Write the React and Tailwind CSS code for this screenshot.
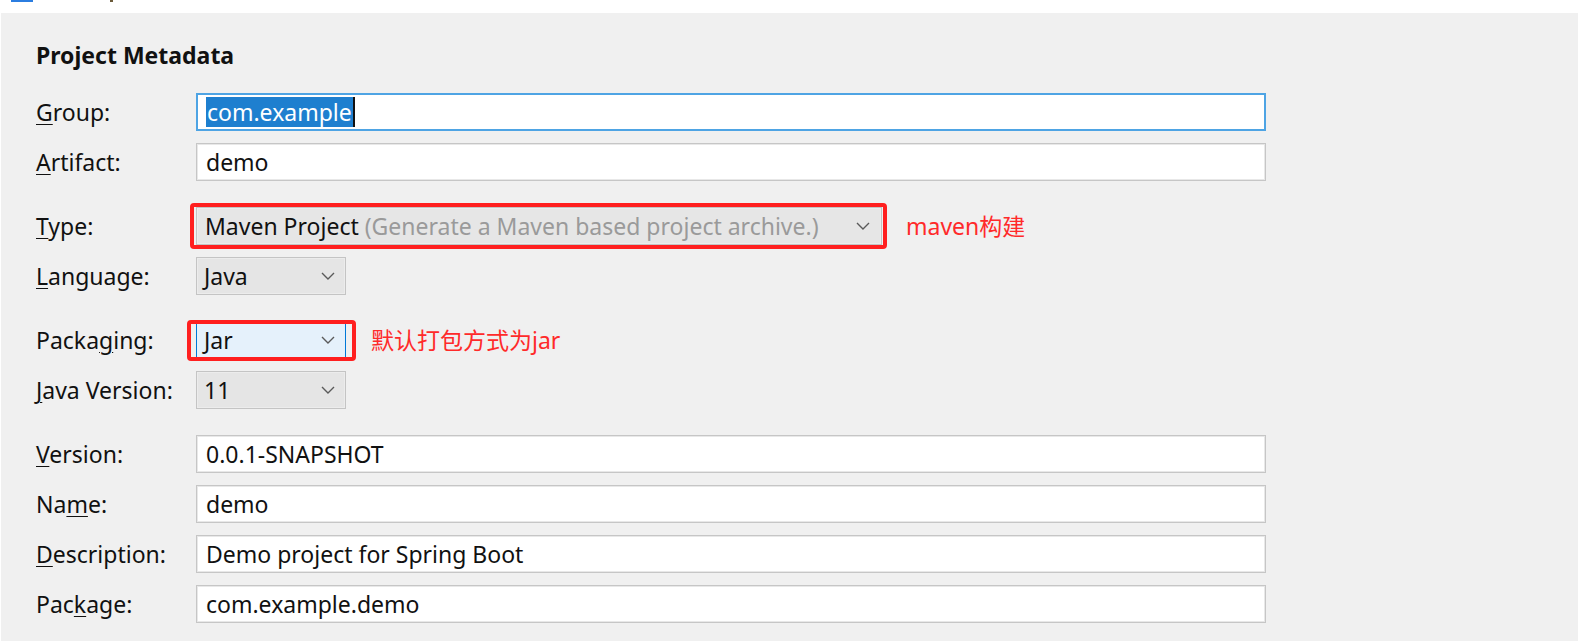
import React from "react";

const font = { fontFamily: '"Noto Sans", "Noto Sans CJK SC", sans-serif' };

function Chevron() {
  return (
    <svg width="14" height="8" viewBox="0 0 14 8" className="shrink-0">
      <polyline points="1,1 7,7 13,1" fill="none" stroke="#5a5a5a" strokeWidth="1.4" />
    </svg>
  );
}

function Label({ pre, u, post }) {
  return (
    <div className="w-[160px] shrink-0 text-[23px] text-[#111] whitespace-nowrap">
      {pre}
      <u className="underline underline-offset-[3px] decoration-1">{u}</u>
      {post}
    </div>
  );
}

function TextField({ value }) {
  return (
    <div className="w-[1070px] h-[38px] bg-white border border-[#c6c6c6] shadow-[inset_0_0_0_1px_#e8e8e8] flex items-center pl-[9px] text-[23px] text-[#111]">
      {value}
    </div>
  );
}

function Row({ label, children }) {
  return (
    <div className="flex items-center h-[38px]">
      <Label {...label} />
      {children}
    </div>
  );
}

function SmallSelect({ value }) {
  return (
    <div className="w-[150px] h-[38px] bg-[#e5e5e5] border border-[#c4c4c4] shadow-[inset_0_0_0_1px_#ececec] flex items-center justify-between pl-[7px] pr-[10px] text-[23px] text-[#111]">
      <span>{value}</span>
      <Chevron />
    </div>
  );
}

export default function App() {
  return (
    <div className="w-[1578px] h-[641px] bg-white overflow-hidden" style={font}>
      <div className="h-[13px] relative">
        <div className="absolute left-[11px] top-0 w-[22px] h-[2px] bg-[#2b7de0]" />
        <div className="absolute left-[110px] top-0 w-[3px] h-[2px] bg-[#6b5a3a]" />
      </div>
      <div className="ml-[1px] h-[628px] bg-[#f0f0f0] pl-[35px] pt-[27px]">
        <div className="text-[23px] font-bold leading-[30px] text-[#111]">Project Metadata</div>

        <div className="mt-[23px] flex flex-col gap-[12px]">
          <Row label={{ pre: "", u: "G", post: "roup:" }}>
            <div className="w-[1070px] h-[38px] bg-white border-2 border-[#4ea4e4] flex items-center pl-[8px] text-[23px]">
              <span className="bg-[#1e7fcf] text-white leading-[30px] px-[1px]">com.example</span>
              <span className="w-[2px] h-[30px] bg-[#111]" />
            </div>
          </Row>
          <Row label={{ pre: "", u: "A", post: "rtifact:" }}>
            <TextField value="demo" />
          </Row>
        </div>

        <div className="mt-[26px] flex flex-col gap-[12px]">
          <Row label={{ pre: "", u: "T", post: "ype:" }}>
            <div className="relative">
              <div className="w-[686px] h-[38px] bg-[#e6e6e6] border border-[#c4c4c4] shadow-[inset_0_0_0_1px_#ececec] flex items-center justify-between pl-[8px] pr-[11px] text-[23px]">
                <span className="whitespace-nowrap">
                  <span className="text-[#111]">Maven Project</span>
                  <span className="text-[#9a9a9a]"> (Generate a Maven based project archive.)</span>
                </span>
                <Chevron />
              </div>
              <div className="absolute -left-[6px] -right-[5px] -top-[4px] -bottom-[4px] border-[4px] border-[#ff1f1f] rounded-[4px]" />
            </div>
            <div className="ml-[24px] text-[23px] text-[#ff2a2a] whitespace-nowrap">maven构建</div>
          </Row>
          <Row label={{ pre: "", u: "L", post: "anguage:" }}>
            <SmallSelect value="Java" />
          </Row>
        </div>

        <div className="mt-[26px] flex flex-col gap-[12px]">
          <Row label={{ pre: "Packa", u: "g", post: "ing:" }}>
            <div className="relative">
              <div className="w-[150px] h-[38px] bg-[#e5f1fb] border border-[#0078d7] flex items-center justify-between pl-[7px] pr-[10px] text-[23px] text-[#111]">
                <span>Jar</span>
                <Chevron />
              </div>
              <div className="absolute -left-[9px] -right-[10px] -top-[1px] -bottom-[2px] border-[4px] border-[#ff1f1f] rounded-[4px]" />
            </div>
            <div className="ml-[25px] text-[23px] text-[#ff2a2a] whitespace-nowrap">默认打包方式为jar</div>
          </Row>
          <Row label={{ pre: "", u: "J", post: "ava Version:" }}>
            <SmallSelect value="11" />
          </Row>
        </div>

        <div className="mt-[26px] flex flex-col gap-[12px]">
          <Row label={{ pre: "", u: "V", post: "ersion:" }}>
            <TextField value="0.0.1-SNAPSHOT" />
          </Row>
          <Row label={{ pre: "Na", u: "m", post: "e:" }}>
            <TextField value="demo" />
          </Row>
          <Row label={{ pre: "", u: "D", post: "escription:" }}>
            <TextField value="Demo project for Spring Boot" />
          </Row>
          <Row label={{ pre: "Pac", u: "k", post: "age:" }}>
            <TextField value="com.example.demo" />
          </Row>
        </div>
      </div>
    </div>
  );
}
